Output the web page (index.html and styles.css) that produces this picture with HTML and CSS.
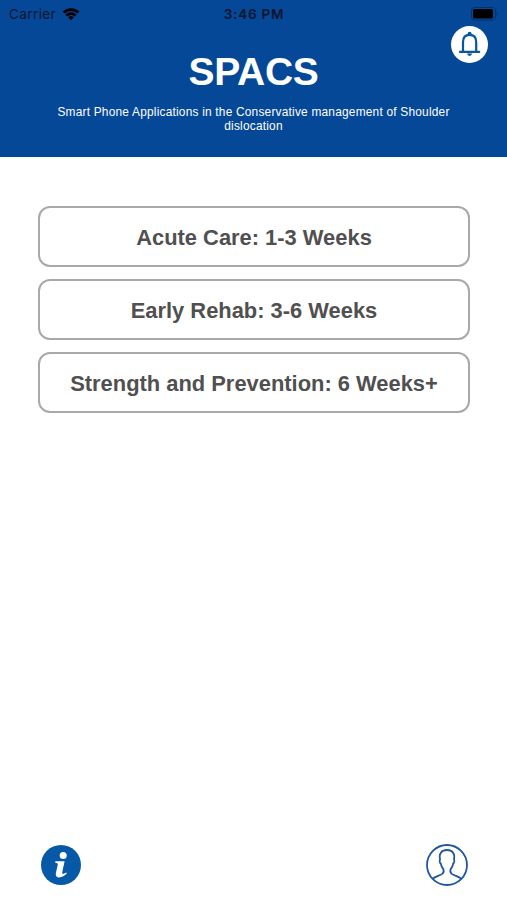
FILE: index.html
```
<!DOCTYPE html>
<html lang="en">
<head>
    <meta charset="UTF-8">
    <meta name="viewport" content="width=device-width, initial-scale=1.0">
    <title>SPACS</title>
    <link rel="stylesheet" href="styles.css">
</head>
<body>
    <header class="header">
        <div class="status-bar">
            <div class="carrier">
                <span>Carrier</span>
                <svg class="wifi" viewBox="0 0 18 14">
                    <path d="M0.6 4.6 A12 12 0 0 1 17.4 4.6 L15.5 6.6 A9.2 9.2 0 0 0 2.5 6.6 Z"/>
                    <path d="M3.4 7.5 A8 8 0 0 1 14.6 7.5 L12.7 9.4 A5.3 5.3 0 0 0 5.3 9.4 Z"/>
                    <path d="M6.2 10.4 A4 4 0 0 1 11.8 10.4 L9 13.2 Z"/>
                </svg>
            </div>
            <div class="time">3:46 PM</div>
            <svg class="battery" viewBox="0 0 28 14">
                <rect class="battery-case" x="0.5" y="0.5" width="24" height="12.6" rx="3"/>
                <rect x="2" y="2" width="20" height="9.6" rx="1.5"/>
                <path class="battery-tip" d="M25.6 4.5 Q27.8 6.8 25.6 9 Z"/>
            </svg>
        </div>
        <button class="notifications" aria-label="Notifications">
            <svg viewBox="0 0 37 37">
                <path class="bell" d="M12 25.6 V16 C12 11.2 14.8 8.8 18.6 8.8 C22.4 8.8 25.2 11.2 25.2 16 V25.6"/>
                <path class="bell" d="M9 25.9 H28.2"/>
                <circle class="bell-fill" cx="18.6" cy="7.7" r="2"/>
                <path class="bell-fill" d="M16 27.6 H21.2 Q20.6 30 18.6 30 Q16.6 30 16 27.6 Z"/>
            </svg>
        </button>
        <h1>SPACS</h1>
        <p class="subtitle">Smart Phone Applications in the Conservative management of Shoulder dislocation</p>
    </header>

    <main class="phases">
        <button class="phase">Acute Care: 1-3 Weeks</button>
        <button class="phase">Early Rehab: 3-6 Weeks</button>
        <button class="phase">Strength and Prevention: 6 Weeks+</button>
    </main>

    <footer class="footer">
        <button class="info" aria-label="Information">
            <svg viewBox="0 0 40 40">
                <circle class="info-disc" cx="20" cy="20" r="20"/>
                <circle class="info-mark" cx="22.2" cy="10.4" r="3.5"/>
                <path class="info-mark" d="M14.4 16.2 H23.6 L21.2 27.4 C20.9 29.4 22.4 29.2 25.2 27.4 L25.8 28.6 C23 31.3 20.6 32.4 18.2 32.4 C15.2 32.4 14.4 30.2 15 27.4 L16.8 19.4 C17 18.2 16.2 17.8 14.2 17.7 Z"/>
            </svg>
        </button>
        <button class="profile" aria-label="Profile">
            <svg viewBox="0 0 42 42">
                <circle cx="21" cy="21" r="20"/>
                <path d="M6.8 34.6 C9.5 32.4 14.6 31.4 16.6 29.6 C17.8 28.4 17.8 26.2 17.2 24.8 C15.8 23.4 15.2 21.8 14.9 19.8 C13.8 19 13.3 16.8 14 15.4 C12.8 9.6 15.6 6 21 6 C26.4 6 29.2 9.6 28 15.4 C28.7 16.8 28.2 19 27.1 19.8 C26.8 21.8 26.2 23.4 24.8 24.8 C24.2 26.2 24.2 28.4 25.4 29.6 C27.4 31.4 32.5 32.4 35.2 34.6"/>
            </svg>
        </button>
    </footer>
</body>
</html>
```
FILE: styles.css
```
* {
    box-sizing: border-box;
}
body {
    font-family: 'Liberation Sans', Arial, sans-serif;
    background-color: #fff;
    display: flex;
    flex-direction: column;
    height: 100vh;
    margin: 0;
}
button {
    font-family: inherit;
    border: none;
    background: none;
    padding: 0;
    cursor: pointer;
}
svg {
    display: block;
}
.header {
    position: relative;
    height: 157px;
    background-color: #064898;
    color: #fff;
    text-align: center;
}
.status-bar {
    display: grid;
    grid-template-columns: 1fr auto 1fr;
    align-items: center;
    height: 27px;
    padding: 0 8px 0 9px;
    font-family: Inter, 'Liberation Sans', sans-serif;
    font-size: 13.5px;
    color: #04142c;
}
.carrier {
    display: flex;
    align-items: center;
    gap: 6px;
    letter-spacing: 0.4px;
}
.wifi {
    width: 18px;
    height: 14px;
    fill: #000;
}
.time {
    font-weight: 600;
    letter-spacing: 0.8px;
}
.battery {
    width: 28px;
    height: 14px;
    justify-self: end;
}
.battery-case {
    fill: none;
    stroke: #05306a;
}
.battery-tip {
    fill: #05306a;
}
.notifications {
    position: absolute;
    top: 26px;
    right: 19px;
    width: 37px;
    height: 37px;
    border-radius: 50%;
    background-color: #fff;
}
.bell {
    fill: none;
    stroke: #07579f;
    stroke-width: 2.2;
    stroke-linecap: round;
}
.bell-fill {
    fill: #07579f;
}
h1 {
    margin: 23px 0 0;
    font-size: 39px;
    line-height: 44px;
    letter-spacing: -0.3px;
}
.subtitle {
    width: 410px;
    margin: 11px auto 0;
    font-size: 11.9px;
    line-height: 14px;
    letter-spacing: 0.21px;
}
.phases {
    flex: 1;
    display: flex;
    flex-direction: column;
    gap: 12px;
    padding: 49px 37px 0 38px;
}
.phase {
    height: 61px;
    padding-top: 2px;
    border: 2px solid #a9a9a9;
    border-radius: 12px;
    font-size: 21.9px;
    font-weight: bold;
    color: #505050;
}
.footer {
    display: flex;
    justify-content: space-between;
    align-items: center;
    padding: 0 39px 14px 41px;
}
.info {
    width: 40px;
    height: 40px;
}
.info-disc {
    fill: #0759a8;
}
.info-mark {
    fill: #fff;
}
.profile {
    width: 42px;
    height: 42px;
}
.profile svg {
    fill: none;
    stroke: #1f569e;
    stroke-width: 1.8;
}
```
